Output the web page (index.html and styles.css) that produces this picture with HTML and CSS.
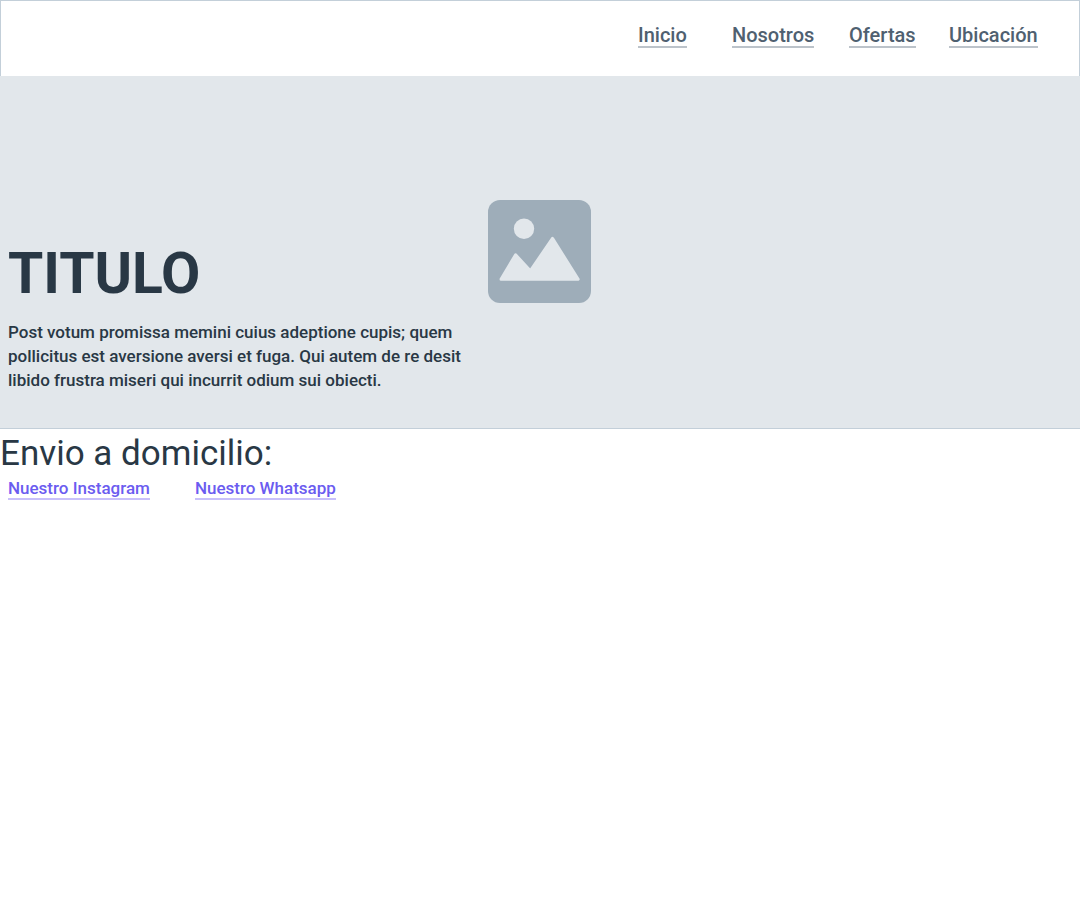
FILE: index.html
```html
<!DOCTYPE html>
<html lang="es">
<head>
  <meta charset="utf-8">
  <meta name="viewport" content="width=device-width, initial-scale=1">
  <title>Inicio</title>
  <link rel="stylesheet" href="styles.css">
</head>
<body>
  <header class="header">
    <nav class="nav">
      <a class="nav-link" href="#inicio">Inicio</a>
      <a class="nav-link" href="#nosotros">Nosotros</a>
      <a class="nav-link" href="#ofertas">Ofertas</a>
      <a class="nav-link" href="#ubicacion">Ubicación</a>
    </nav>
  </header>
  <main>
    <section class="hero" id="inicio">
      <svg class="hero-image" viewBox="0 0 103 103" aria-hidden="true">
        <rect width="103" height="103" rx="12" fill="#9eadb9"/>
        <circle cx="36" cy="28.700" r="10.200" fill="#e2e7eb"/>
        <path d="M13 79.200 L27.600 54.800 L42.300 70.800 L64.500 38.400 L90.200 79.200 Z" fill="#e2e7eb" stroke="#e2e7eb" stroke-width="3" stroke-linejoin="round"/>
      </svg>
      <div class="hero-copy">
        <h1 class="title">TITULO</h1>
        <p class="text">Post votum promissa memini cuius adeptione cupis; quem pollicitus est aversione aversi et fuga. Qui autem de re desit libido frustra miseri qui incurrit odium sui obiecti.</p>
      </div>
    </section>
    <section class="delivery">
      <h2 class="subtitle">Envio a domicilio:</h2>
      <div class="socials">
        <a class="social-link" href="#instagram">Nuestro Instagram</a>
        <a class="social-link" href="#whatsapp">Nuestro Whatsapp</a>
      </div>
    </section>
  </main>
</body>
</html>
```
FILE: styles.css
```css
* {
  box-sizing: border-box;
}

body {
  margin: 0;
  background: #fff;
  color: #293845;
  font-family: Roboto, "Liberation Sans", sans-serif;
}

.header {
  display: flex;
  justify-content: flex-end;
  padding: 24px 42px 28px;
  border: 1px solid #c3cfd9;
  border-bottom: 0;
}

.nav {
  display: grid;
  grid-template-columns: 94px 117px 100px 88px;
  justify-items: start;
}

.nav-link {
  border-bottom: 2px solid #bcc3ca;
  color: #4f6070;
  font-size: 20px;
  font-weight: 500;
  line-height: 21px;
  text-decoration: none;
}

.hero {
  display: grid;
  padding: 124px 9px 36px 8px;
  border-bottom: 1px solid #c3cfd9;
  background: #e2e7eb;
}

.hero-image,
.hero-copy {
  grid-area: 1 / 1;
}

.hero-image {
  justify-self: center;
  width: 103px;
  height: 103px;
}

.hero-copy {
  max-width: 470px;
  padding-top: 42px;
}

.title {
  margin: 0 0 14px;
  font-size: 57px;
  font-weight: 700;
  line-height: 64px;
}

.text {
  margin: 0;
  font-size: 17px;
  font-weight: 500;
  line-height: 24px;
}

.subtitle {
  margin: 0;
  font-size: 35px;
  font-weight: 400;
  line-height: 50px;
}

.socials {
  display: flex;
  gap: 45px;
  padding: 0 8px;
}

.social-link {
  border-bottom: 2px solid #c8c0fa;
  color: #6b5cf0;
  font-size: 17px;
  font-weight: 500;
  line-height: 19px;
  text-decoration: none;
}
```
